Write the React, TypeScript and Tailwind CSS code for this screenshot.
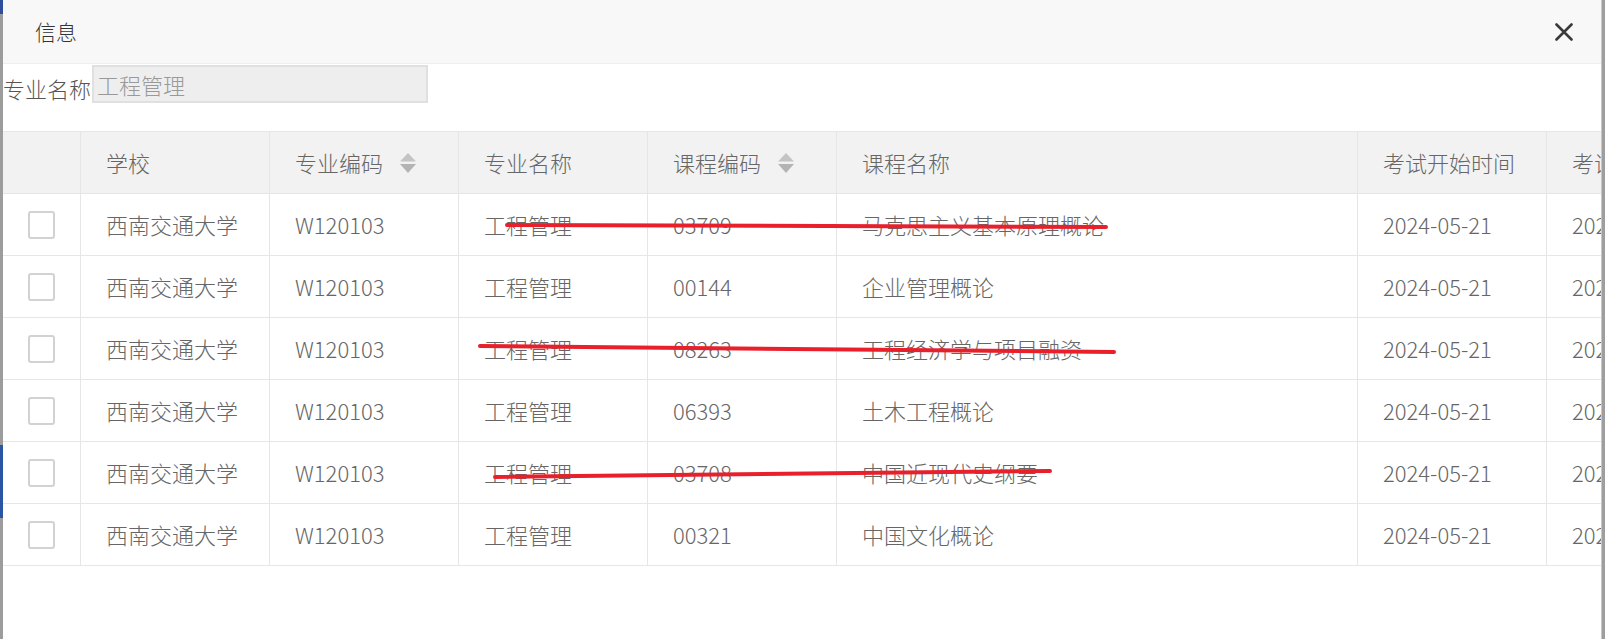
import React from 'react'

const rows = [
  { code: '03709', name: '马克思主义基本原理概论' },
  { code: '00144', name: '企业管理概论' },
  { code: '08263', name: '工程经济学与项目融资' },
  { code: '06393', name: '土木工程概论' },
  { code: '03708', name: '中国近现代史纲要' },
  { code: '00321', name: '中国文化概论' },
]

function SortIcon() {
  return (
    <svg width="16" height="20" viewBox="0 0 16 20" className="ml-[17px] shrink-0">
      <polygon points="8,0 16,8.5 0,8.5" fill="#c4c4c4" />
      <polygon points="0,11 16,11 8,20" fill="#b4b4b4" />
    </svg>
  )
}

function Cell({ w, children, className = '' }: { w: string; children?: React.ReactNode; className?: string }) {
  return (
    <div className={`${w} shrink-0 h-full border-r border-[#e6e6e6] flex items-center pl-[25px] whitespace-nowrap ${className}`}>
      {children}
    </div>
  )
}

export default function App() {
  return (
    <div
      className="relative w-[1605px] h-[639px] overflow-hidden flex bg-[#a3a3a3]"
      style={{ fontFamily: '"Noto Sans CJK SC", "Noto Sans", sans-serif' }}
    >
      {/* left edge of the page behind */}
      <div className="w-[3px] shrink-0 flex flex-col bg-[#9c9c9c]">
        <div className="h-[14px] bg-[#2f4f9c]" />
        <div className="h-[431px]" />
        <div className="h-[73px] bg-[#2a55a5]" />
      </div>

      {/* dialog */}
      <div className="w-[1598px] shrink-0 bg-white flex flex-col overflow-hidden">
        <div className="h-[64px] shrink-0 bg-[#f8f8f8] border-b border-[#eeeeee] flex items-center justify-between pl-[32px] pr-[28px]">
          <span className="text-[21px] text-[#333] font-light">信息</span>
          <svg width="18" height="18" viewBox="0 0 18 18">
            <path d="M1.5 1.5 L16.5 16.5 M16.5 1.5 L1.5 16.5" stroke="#3a3a3a" strokeWidth="2.6" strokeLinecap="round" />
          </svg>
        </div>

        <div className="h-[67px] shrink-0 flex items-start pt-[1px] font-light">
          <span className="text-[22px] text-[#555] mt-[8px] leading-[30px]">专业名称</span>
          <div className="ml-[1px] w-[336px] h-[38px] bg-[#eeeeee] border-2 border-[#e0e0e0] flex items-center pl-[3px] text-[22px] text-[#999]">
            工程管理
          </div>
        </div>

        {/* table */}
        <div className="text-[22px] text-[#666] font-light">
          <div className="flex h-[63px] bg-[#f2f2f2] border-y border-[#e6e6e6]">
            <Cell w="w-[78px]" />
            <Cell w="w-[189px]">学校</Cell>
            <Cell w="w-[189px]">专业编码<SortIcon /></Cell>
            <Cell w="w-[189px]">专业名称</Cell>
            <Cell w="w-[189px]">课程编码<SortIcon /></Cell>
            <Cell w="w-[521px]">课程名称</Cell>
            <Cell w="w-[189px]">考试开始时间</Cell>
            <Cell w="w-[189px]">考试结束时间</Cell>
          </div>
          {rows.map((r) => (
            <div key={r.code} className="flex h-[62px] border-b border-[#e6e6e6]">
              <Cell w="w-[78px]" className="!pl-0 justify-center">
                <div className="w-[27px] h-[28px] border-2 border-[#d2d2d2] rounded-[3px] bg-white" />
              </Cell>
              <Cell w="w-[189px]">西南交通大学</Cell>
              <Cell w="w-[189px]">W120103</Cell>
              <Cell w="w-[189px]">工程管理</Cell>
              <Cell w="w-[189px]">{r.code}</Cell>
              <Cell w="w-[521px]">{r.name}</Cell>
              <Cell w="w-[189px]">2024-05-21</Cell>
              <Cell w="w-[189px]">2024-05-21</Cell>
            </div>
          ))}
        </div>
      </div>

      {/* right edge of the page behind */}
      <div className="w-[4px] shrink-0 bg-[#9e9e9e] border-l border-[#c8c8c8]" />

      {/* hand-drawn strike-through annotations */}
      <svg className="absolute inset-0 pointer-events-none" width="1605" height="639">
        <path d="M507 225 L1106 227" stroke="#e8202c" strokeWidth="4" strokeLinecap="round" />
        <path d="M480 346 L1114 352" stroke="#e8202c" strokeWidth="4" strokeLinecap="round" />
        <path d="M495 477 L1050 471" stroke="#e8202c" strokeWidth="4" strokeLinecap="round" />
      </svg>
    </div>
  )
}
